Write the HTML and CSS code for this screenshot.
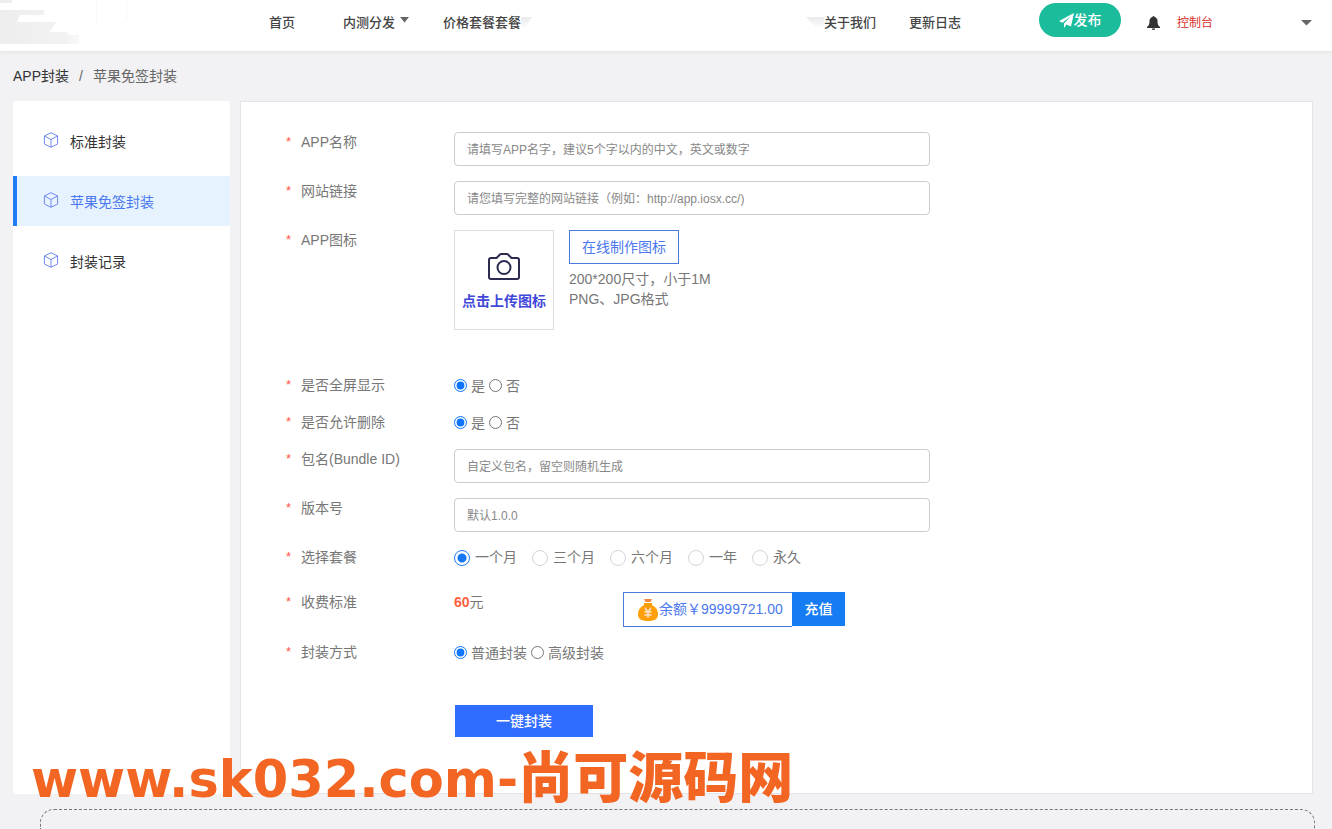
FILE: index.html
```html
<!DOCTYPE html>
<html lang="zh-CN">
<head>
<meta charset="utf-8">
<title>苹果免签封装</title>
<meta name="viewport" content="width=device-width, initial-scale=1">
<link rel="stylesheet" href="styles.css">
</head>
<body>
<svg class="defs" aria-hidden="true">
  <symbol id="cube" viewBox="0 0 16 16"><path d="M8 .7 14.6 4v8L8 15.3 1.4 12V4zM1.4 4 8 7.5 14.6 4M8 7.5v7.8" fill="none" stroke="currentColor" stroke-linejoin="round"/></symbol>
</svg>
<header class="header">
  <div class="logo">
    <svg width="140" height="46" viewBox="0 0 140 46" aria-hidden="true">
      <defs>
        <linearGradient id="fade" x1="0" x2="1"><stop offset="0" stop-color="#ededee"/><stop offset=".8" stop-color="#f2f2f3"/><stop offset="1" stop-color="#f8f8f8"/></linearGradient>
      </defs>
      <path d="M0 0h12v3H0zM0 10h44v5H20l-3 7h39l-6 10h18v3h11v9H0z" fill="url(#fade)"/>
      <path d="M96.500 0v24M126.500 0v20" stroke="#f8f8f8"/>
    </svg>
  </div>
  <nav class="nav">
    <a href="#">首页</a>
    <a href="#">内测分发<svg class="caret" width="9" height="6" viewBox="0 0 9 6" aria-hidden="true"><path d="M0 0h9L4.500 5.500z" fill="currentColor"/></svg></a>
    <a href="#">价格套餐套餐</a>
    <svg class="smudge" width="303" height="16" viewBox="0 0 303 16" aria-hidden="true">
      <defs><linearGradient id="smudge" x2="0" y2="1"><stop stop-color="#e9eaec"/><stop offset="1" stop-color="#fff"/></linearGradient></defs>
      <path d="M0 4h11L4 15H0zM285 4h18v12h-7z" fill="url(#smudge)"/>
    </svg>
    <a href="#">关于我们</a>
    <a href="#">更新日志</a>
  </nav>
  <button class="publish" type="button"><svg width="15" height="15" viewBox="0 0 15 15" aria-hidden="true"><path d="M15 0 0 8l3.500 1.800L12 3 5 10.500V15l2.500-3.400L12 13.500z" fill="currentColor"/></svg>发布</button>
  <svg class="bell" width="13" height="14" viewBox="0 0 13 14" role="img" aria-label="通知"><path d="M5.500 1a1 1 0 0 1 2 0c2 .5 3 2 3 4 0 3.500.8 4.800 2.500 6v1H0v-1c1.700-1.200 2.500-2.500 2.500-6 0-2 1-3.500 3-4zM4.800 12.400h3.400a1.700 1.600 0 0 1-3.400 0z" fill="#333"/></svg>
  <a class="console" href="#">控制台</a>
  <button class="account" type="button" aria-label="账户"><svg width="11" height="6" viewBox="0 0 11 6" aria-hidden="true"><path d="M0 0h11L5.500 5.500z" fill="currentColor"/></svg></button>
</header>

<nav class="breadcrumb"><a href="#">APP封装</a><span>/</span><span>苹果免签封装</span></nav>

<div class="layout">
  <aside class="sidebar">
    <a class="item" href="#"><svg width="16" height="16"><use href="#cube"/></svg>标准封装</a>
    <a class="item active" href="#"><svg width="16" height="16"><use href="#cube"/></svg>苹果免签封装</a>
    <a class="item" href="#"><svg width="16" height="16"><use href="#cube"/></svg>封装记录</a>
  </aside>

  <main class="panel">
    <form class="form">
      <div class="row">
        <label class="label" for="name">APP名称</label>
        <input class="text" id="name" type="text" placeholder="请填写APP名字，建议5个字以内的中文，英文或数字">
      </div>
      <div class="row">
        <label class="label" for="url">网站链接</label>
        <input class="text" id="url" type="text" placeholder="请您填写完整的网站链接（例如：http://app.iosx.cc/)">
      </div>
      <div class="row icon-row">
        <span class="label">APP图标</span>
        <button class="upload" type="button">
          <svg width="32" height="27" viewBox="0 0 32 27" aria-hidden="true"><g fill="none" stroke="#2b2b52" stroke-width="2"><path d="M3 5h5.500L12 1.500Q12.500 1 13 1h6q.5 0 1 .5L23.500 5H29q2 0 2 2v17q0 2-2 2H3q-2 0-2-2V7q0-2 2-2z" stroke-linejoin="round"/><circle cx="16" cy="14.500" r="6.500"/></g></svg>
          点击上传图标
        </button>
        <div class="icon-help">
          <button class="make" type="button">在线制作图标</button>
          <p class="hint">200*200尺寸，小于1M<br>PNG、JPG格式</p>
        </div>
      </div>
      <div class="row short">
        <span class="label">是否全屏显示</span>
        <div class="radios">
          <label><input type="radio" name="full" checked>是</label>
          <label><input type="radio" name="full">否</label>
        </div>
      </div>
      <div class="row short">
        <span class="label">是否允许删除</span>
        <div class="radios">
          <label><input type="radio" name="remove" checked>是</label>
          <label><input type="radio" name="remove">否</label>
        </div>
      </div>
      <div class="row">
        <label class="label" for="bundle">包名(Bundle ID)</label>
        <input class="text" id="bundle" type="text" placeholder="自定义包名，留空则随机生成">
      </div>
      <div class="row">
        <label class="label" for="version">版本号</label>
        <input class="text" id="version" type="text" placeholder="默认1.0.0">
      </div>
      <div class="row plan-row">
        <span class="label">选择套餐</span>
        <div class="plans">
          <label><input type="radio" name="plan" checked>一个月</label>
          <label><input type="radio" name="plan">三个月</label>
          <label><input type="radio" name="plan">六个月</label>
          <label><input type="radio" name="plan">一年</label>
          <label><input type="radio" name="plan">永久</label>
        </div>
      </div>
      <div class="row">
        <span class="label">收费标准</span>
        <span class="price"><b>60</b>元</span>
        <div class="balance">
          <svg width="20" height="22" viewBox="0 0 20 22" aria-hidden="true"><path d="M6 0h8l-1.500 3h-5z" fill="#f08a3c"/><path d="M6 4h8v2c4 2 6 5 6 9 0 5-3 7-10 7S0 20 0 15c0-4 2-7 6-9z" fill="#ff9f0a"/><path d="m7 9 3 4 3-4M6.500 13h7M6.500 16h7M10 13v6" fill="none" stroke="#ffe4d0" stroke-width="1.400"/></svg>
          <span>余额￥99999721.00</span>
        </div>
        <button class="recharge" type="button">充值</button>
      </div>
      <div class="row short">
        <span class="label">封装方式</span>
        <div class="radios">
          <label><input type="radio" name="mode" checked>普通封装</label>
          <label><input type="radio" name="mode">高级封装</label>
        </div>
      </div>
      <button class="submit" type="submit">一键封装</button>
    </form>
  </main>
</div>
<footer class="dashed"></footer>
<div class="watermark">www.sk032.com-<span>尚可源码网</span></div>
</body>
</html>
```
FILE: styles.css
```css
* { box-sizing: border-box; }

body {
  margin: 0;
  height: 100vh;
  overflow: hidden;
  display: flex;
  flex-direction: column;
  position: relative;
  background: #f2f2f4;
  color: #777;
  font: 14px/20px "Liberation Sans", "Noto Sans CJK SC", sans-serif;
}

a { color: inherit; text-decoration: none; }
button, input { font: inherit; margin: 0; }
button { cursor: pointer; padding: 0; }
.defs { position: absolute; width: 0; height: 0; }

.header {
  display: flex;
  flex: none;
  height: 51px;
  background: #fff;
  box-shadow: 0 1px 4px rgba(0, 0, 0, .08);
}
.logo { width: 269px; flex: none; }
.nav {
  display: flex;
  align-items: flex-start;
  padding-top: 13px;
  color: #444;
  font-size: 13px;
  font-weight: 500;
  white-space: nowrap;
}
.nav a + a { margin-left: 48px; }
.nav a:nth-of-type(3) { margin-left: 34px; }
.nav a:last-child { margin-left: 33px; }
.caret { margin-left: 5px; vertical-align: 4px; color: #666; }
.smudge { flex: none; }

.publish {
  display: flex;
  align-items: center;
  justify-content: center;
  width: 82px;
  height: 34px;
  margin: 3px 26px 0 78px;
  border: 0;
  border-radius: 17px;
  background: #1abc9c;
  color: #fff;
  font-weight: 500;
}
.bell { margin: 16px 17px 0 0; }
.console { margin-top: 13px; font-size: 12px; color: #d9302c; }
.account {
  margin: 20px 20px 0 auto;
  height: 6px;
  border: 0;
  background: none;
  color: #666;
  line-height: 0;
}

.breadcrumb {
  display: flex;
  flex: none;
  gap: 10px;
  padding: 15px 13px;
}
.breadcrumb a { color: #333; }
.breadcrumb span { color: #666; }

.layout {
  display: flex;
  flex: none;
  gap: 10px;
  padding: 0 19px 0 13px;
}
.sidebar {
  width: 217px;
  flex: none;
  padding-top: 15px;
  background: #fff;
  border-radius: 4px;
}
.item {
  display: flex;
  gap: 11px;
  height: 50px;
  margin-bottom: 10px;
  padding: 16px 0 0 26px;
  border-left: 4px solid transparent;
  color: #333;
}
.item svg { color: #7288f0; }
.item.active {
  border-color: #1f7bf6;
  background: #e6f3ff;
  color: #4b78ee;
}

.panel {
  flex: 1;
  padding: 30px 20px 56px 45px;
  background: #fff;
  border: 1px solid #e4e4e6;
}
.row {
  display: flex;
  align-items: flex-start;
  margin-bottom: 15px;
}
.label {
  display: flex;
  width: 168px;
  flex: none;
}
.label::before {
  content: "*";
  width: 15px;
  color: #ff5545;
  font-size: 13px;
}
.text {
  width: 476px;
  height: 34px;
  padding: 1px 12px 0;
  border: 1px solid #ccc;
  border-radius: 4px;
  background: #fff;
  font-size: 12px;
}
.text::placeholder { color: #888; opacity: 1; }

.icon-row { margin-bottom: 45px; }
.upload {
  display: flex;
  flex-direction: column;
  align-items: center;
  gap: 11px;
  width: 100px;
  height: 100px;
  padding-top: 22px;
  border: 1px solid #ddd;
  background: #fff;
  color: #3f48d8;
  font-weight: 700;
  white-space: nowrap;
}
.icon-help { margin-left: 15px; }
.make {
  width: 110px;
  height: 34px;
  border: 1px solid #4b78dd;
  background: #fff;
  color: #4b78ee;
}
.hint { margin: 5px 0 0; }

.short { height: 22px; }
.radios { display: flex; gap: 4px; }
.radios label { display: flex; padding-top: 1px; }
.radios input {
  width: 13px;
  height: 13px;
  margin: 3px 4px 0 0;
  accent-color: #0d75ff;
}

.plan-row { height: 30px; }
.plans { display: flex; gap: 15px; }
.plans label { display: flex; gap: 5px; }
.plans input {
  appearance: none;
  width: 16px;
  height: 16px;
  margin-top: 3px;
  border: 1px solid #d5d5d8;
  border-radius: 50%;
}
.plans input:checked {
  border-color: #1f7bf6;
  background: radial-gradient(circle, #1677f5 4px, #fff 5px);
}

.price { width: 169px; }
.price b { color: #ff5f40; }
.balance {
  display: flex;
  gap: 1px;
  width: 169px;
  height: 35px;
  padding: 6px 0 0 14px;
  border: 1px solid #4b78dd;
  border-right: 0;
  color: #4b78ee;
  white-space: nowrap;
}
.recharge {
  width: 53px;
  height: 34px;
  border: 0;
  background: #167cf3;
  color: #fff;
  font-weight: 500;
}
.submit {
  display: block;
  width: 138px;
  height: 32px;
  margin: 41px 0 0 169px;
  border: 0;
  background: #306cff;
  color: #fff;
  font-weight: 500;
}

.dashed {
  flex: 1;
  margin: 15px 17px 0 40px;
  border: 1px dashed #777;
  border-bottom: 0;
  border-radius: 14px 14px 0 0;
}

.watermark {
  position: absolute;
  left: 31px;
  top: 738px;
  display: flex;
  align-items: baseline;
  color: #f26522;
  font: 700 51px/70px "DejaVu Sans", "Noto Sans CJK SC", sans-serif;
  white-space: nowrap;
}
.watermark span {
  font: 900 55px/70px "Noto Sans CJK SC", sans-serif;
}
```
